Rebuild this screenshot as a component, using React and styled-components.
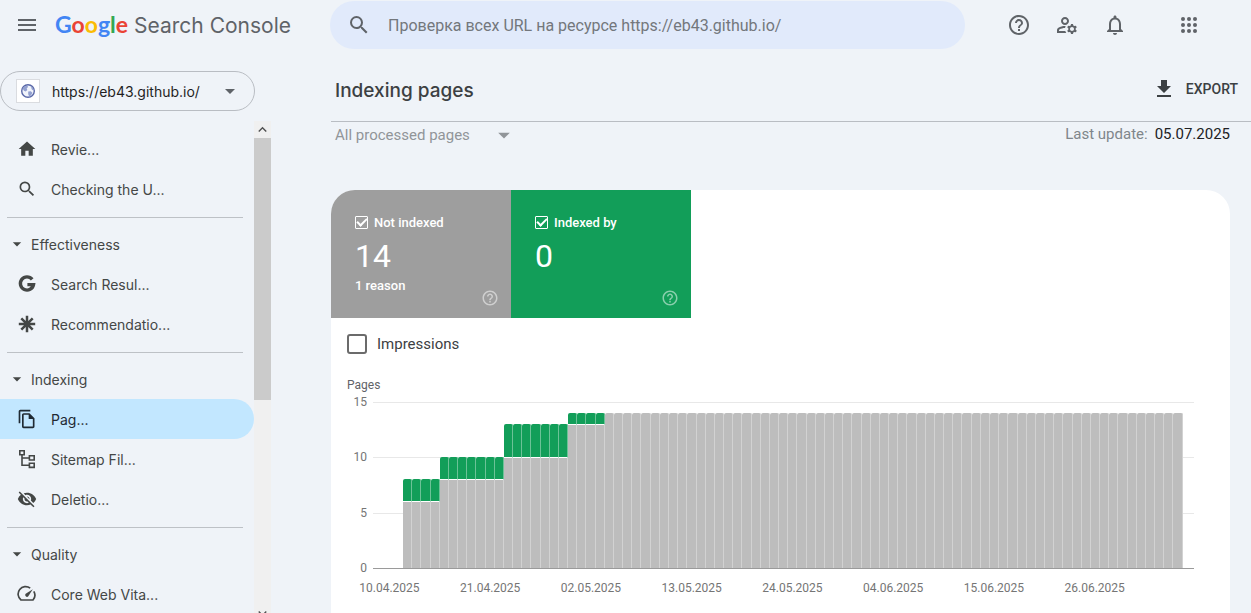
import React from "react";
import styled, { createGlobalStyle } from "styled-components";
import {
  MdMenu, MdSearch, MdHelpOutline, MdOutlineManageAccounts, MdNotificationsNone,
  MdArrowDropDown, MdHome, MdOutlineFileCopy, MdVisibilityOff, MdKeyboardArrowUp, MdKeyboardArrowDown,
} from "react-icons/md";

const GlobalStyle = createGlobalStyle`
  * { box-sizing: border-box; }
  body { margin: 0; background: #eff3f8; color: #3c4043; font-family: Roboto, "Liberation Sans", sans-serif; }
  button, input, select { font: inherit; color: inherit; }
  h1, p { margin: 0; }
  svg { display: block; flex: none; }
`;

const brand = `font-family: Inter, Roboto, sans-serif;`;

const Shell = styled.div`
  height: 100vh;
  overflow: hidden;
  display: flex;
  flex-direction: column;
`;
const TopBar = styled.header`
  display: flex;
  align-items: center;
  height: 50px;
  flex: none;
`;
const BrandArea = styled.div`
  width: 330px;
  flex: none;
  display: flex;
  align-items: center;
  padding-left: 15px;
  gap: 16px;
`;
const IconButton = styled.button`
  border: 0;
  padding: 0;
  background: none;
  color: ${(p) => p.$color || "#5f6368"};
  display: flex;
  cursor: pointer;
`;
const Logo = styled.a`
  ${brand}
  display: flex;
  align-items: baseline;
  gap: 6px;
  font-size: 21px;
  line-height: 32px;
  color: #5f6368;
  text-decoration: none;
  white-space: nowrap;
`;
const Google = styled.span`
  font-family: Lato, Inter, sans-serif;
  font-size: 23px;
  font-weight: 700;
`;
const Letter = styled.span`
  color: ${(p) => p.$c};
`;
const SearchBox = styled.label`
  flex: 0 1 635px;
  height: 48px;
  border-radius: 24px;
  background: #e1eafb;
  display: flex;
  align-items: center;
  gap: 17px;
  padding: 0 17px;
  color: #5f6368;
`;
const SearchInput = styled.input`
  flex: 1;
  min-width: 0;
  border: 0;
  outline: 0;
  padding: 0;
  background: none;
  font-size: 16px;
  &::placeholder { color: #73777c; opacity: 1; }
`;
const Tools = styled.div`
  margin-left: auto;
  padding-right: 50px;
  display: flex;
  gap: 24px;
  & > :last-child { margin-left: 26px; }
`;
const Body = styled.div`
  flex: 1;
  min-height: 0;
  display: flex;
`;
const Sidebar = styled.aside`
  width: 271px;
  flex: none;
  display: flex;
  flex-direction: column;
  padding-top: 21px;
`;
const Property = styled.button`
  ${brand}
  width: 255px;
  height: 40px;
  flex: none;
  border: 1px solid #b9bdc3;
  border-radius: 20px;
  background: none;
  display: flex;
  align-items: center;
  padding: 0 12px 0 15px;
  gap: 12px;
  font-size: 14px;
  color: #1f1f1f;
  & > :last-child { margin-left: auto; color: #5f6368; }
`;
const Favicon = styled.span`
  width: 24px;
  height: 24px;
  background: #fff;
  border: 1px solid #dadce0;
  display: grid;
  place-items: center;
`;
const NavScroll = styled.div`
  flex: 1;
  min-height: 0;
  margin-top: 10px;
  display: flex;
`;
const Nav = styled.nav`
  ${brand}
  width: 254px;
  overflow: hidden;
  padding-top: 8px;
  font-size: 14px;
`;
const NavItem = styled.a`
  height: 40px;
  display: flex;
  align-items: center;
  gap: 14px;
  padding-left: 17px;
  border-radius: 0 20px 20px 0;
  background: ${(p) => (p.$active ? "#c2e7ff" : "none")};
  color: ${(p) => (p.$active ? "#1f2a33" : "#444746")};
  text-decoration: none;
  white-space: nowrap;
`;
const NavGroup = styled.section`
  margin-top: 8px;
`;
const Rule = styled.hr`
  margin: 0 11px 0 7px;
  border: 0;
  border-top: 1px solid #bdc1c6;
`;
const GroupButton = styled.button`
  width: 100%;
  height: 40px;
  border: 0;
  background: none;
  padding: 0 0 0 7px;
  display: flex;
  align-items: center;
  gap: 4px;
  color: #444746;
  margin-top: 6px;
`;
const ScrollRail = styled.div`
  width: 17px;
  background: #f0f0f0;
  display: flex;
  flex-direction: column;
  color: #505050;
`;
const RailEnd = styled.div`
  height: ${(p) => p.$h};
  flex: none;
  overflow: hidden;
`;
const Track = styled.div`
  flex: 1;
`;
const Thumb = styled.div`
  height: 56%;
  background: #cbcbcb;
`;
const Main = styled.main`
  flex: 1;
  min-width: 0;
  margin-left: 60px;
  display: flex;
  flex-direction: column;
`;
const TitleRow = styled.div`
  height: 72px;
  flex: none;
  display: flex;
  align-items: center;
  justify-content: space-between;
  padding: 10px 13px 0 4px;
  border-bottom: 1px solid #b9bdc3;
`;
const Title = styled.h1`
  ${brand}
  font-size: 19px;
  line-height: 28px;
  font-weight: 500;
`;
const Export = styled.button`
  border: 0;
  background: none;
  padding: 0;
  display: flex;
  align-items: center;
  gap: 10px;
  font-size: 14px;
  line-height: 20px;
  font-weight: 500;
  margin-bottom: 4px;
`;
const FilterRow = styled.div`
  height: 24px;
  flex: none;
  display: flex;
  align-items: center;
  justify-content: space-between;
  padding: 0 21px 0 4px;
  font-size: 15px;
  color: #80868b;
`;
const Filter = styled.button`
  border: 0;
  background: none;
  padding: 2px 0 0;
  display: flex;
  align-items: center;
  gap: 20px;
  color: #919599;
`;
const Updated = styled.p`
  display: flex;
  gap: 7px;
  & strong { font-weight: 400; color: #202124; }
`;
const Card = styled.section`
  flex: 1;
  min-height: 0;
  margin: 44px 21px 0 0;
  border-radius: 24px 24px 0 0;
  background: #fff;
  overflow: hidden;
`;
const Metrics = styled.div`
  display: flex;
`;
const Metric = styled.div`
  width: 180px;
  height: 128px;
  padding: 23px 12px 0 24px;
  background: ${(p) => p.$bg};
  color: #fff;
  font-size: 13px;
  font-weight: 500;
  display: grid;
  grid-template-columns: 1fr auto;
  grid-template-rows: 18px 46px 30px;
`;
const MetricLabel = styled.label`
  grid-column: 1 / 3;
  display: flex;
  align-items: center;
  gap: 6px;
`;
const MetricCheck = styled.input`
  appearance: none;
  width: 13px;
  height: 13px;
  margin: 0;
  border: 1px solid #fff;
  border-radius: 1px;
  display: grid;
  place-items: center;
  &:checked::before {
    content: "";
    width: 8px;
    height: 4px;
    border: solid #fff;
    border-width: 0 0 2px 2px;
    transform: translateY(-1px) rotate(-45deg);
  }
`;
const MetricValue = styled.p`
  grid-column: 1 / 3;
  font-size: 32px;
  line-height: 50px;
  font-weight: 400;
`;
const MetricNote = styled.p`
  line-height: 18px;
`;
const MetricHelp = styled(IconButton)`
  align-self: end;
`;
const Impressions = styled.label`
  display: flex;
  align-items: center;
  gap: 10px;
  padding: 16px 16px 0;
  font-size: 15px;
  line-height: 20px;
`;
const BoxCheck = styled.input`
  appearance: none;
  width: 20px;
  height: 20px;
  margin: 0;
  border: 2px solid #6b6b6b;
  border-radius: 3px;
`;
const Chart = styled.figure`
  margin: 22px 0 0;
  font-size: 12px;
  color: #757575;
`;
const AxisTitle = styled.figcaption`
  padding-left: 16px;
  line-height: 18px;
  color: #5f6368;
`;
const PlotRow = styled.div`
  display: flex;
  gap: 6px;
  padding: 0 36px 0 16px;
`;
const YAxis = styled.div`
  width: 20px;
  height: 182px;
  display: flex;
  flex-direction: column;
  justify-content: space-between;
  text-align: right;
  line-height: 16px;
`;
const Plot = styled.div`
  flex: 1;
  height: 167px;
  margin-top: 8px;
  display: grid;
  & > * { grid-area: 1 / 1; }
`;
const GridLines = styled.div`
  display: flex;
  flex-direction: column;
  justify-content: space-between;
`;
const Line = styled.div`
  height: 1px;
  background: ${(p) => (p.$base ? "#9a9a9a" : "#e8e8e8")};
`;
const Bars = styled.div`
  display: flex;
  align-items: flex-end;
  padding: 0 12px 1px 30px;
`;
const Bar = styled.div`
  flex: 1;
  height: ${(p) => (p.$total / 15) * 100}%;
  display: flex;
  flex-direction: column;
  border-radius: 2px 2px 0 0;
  overflow: hidden;
`;
const Segment = styled.div`
  flex: ${(p) => p.$n} 0 0;
  background: ${(p) => (p.$green ? "#129e59" : "#bdbdbd")};
  border-right: 1px solid ${(p) => (p.$green ? "#6cc297" : "#d2d2d2")};
  border-bottom: ${(p) => (p.$green ? "1px solid #fff" : "0")};
`;
const Dates = styled.div`
  display: grid;
  grid-template-columns: repeat(8, 1fr);
  padding: 4px 85px 0 8px;
  text-align: center;
  line-height: 16px;
`;

const AppsIcon = () => (
  <svg width="24" height="24" viewBox="0 0 24 24" fill="currentColor">
    {[6, 12, 18].flatMap((y) => [6, 12, 18].map((x) => <circle key={`${x}-${y}`} cx={x} cy={y} r="2" />))}
  </svg>
);
const DownloadIcon = () => (
  <svg width="24" height="24" viewBox="0 0 24 24" fill="currentColor">
    <path d="M19 9h-4V3H9v6H5l7 7 7-7zM5 18v2h14v-2H5z" />
  </svg>
);
const GlobeIcon = () => (
  <svg width="16" height="16" viewBox="0 0 16 16">
    <circle cx="8" cy="8" r="6.3" fill="#f1f4fb" stroke="#5a68a8" strokeWidth="1.4" />
    <path d="M2.6 5.6l2-2.2 2.6-.8 1 1.3-1.5 1.4.6 1.6-1.6 1.5-1.8-.7zM8.2 8.6l2.6-.4 1.6 1.6-1.4 2.8-1.8.9-1-2.2zM10.6 3.4l2.4 1.8.6 2.2-1.6-.6z" fill="#93a1d0" />
  </svg>
);
const GIcon = () => (
  <svg width="20" height="20" viewBox="0 0 20 20" fill="none" stroke="currentColor" strokeWidth="3.4">
    <path d="M15.2 5.4A6.6 6.6 0 1 0 16.5 10.6H10.4" />
  </svg>
);
const SparkIcon = () => (
  <svg width="20" height="20" viewBox="0 0 20 20" fill="none" stroke="currentColor" strokeWidth="2.5">
    <path d="M10 1.8v16.4M1.8 10h16.4M4.3 4.3l11.4 11.4M15.7 4.3L4.3 15.7" />
  </svg>
);
const SitemapIcon = () => (
  <svg width="20" height="20" viewBox="0 0 20 20" fill="none" stroke="currentColor" strokeWidth="1.6">
    <path d="M2.8 1.8h4.4v4H2.8zM12.4 6.8h4.8v4.2h-4.8zM12.4 14.2h4.8v4.2h-4.8zM5 6v10.3h7.4M5 9h7.4" />
  </svg>
);
const SpeedIcon = () => (
  <svg width="20" height="20" viewBox="0 0 20 20" fill="none" stroke="currentColor" strokeWidth="1.7">
    <path d="M13.2 4.2A7.4 7.4 0 0 0 4 16h12a7.4 7.4 0 0 0 .8-8.6" />
    <path d="M15.8 5.2L8.7 9.8a1.8 1.8 0 1 0 2.6 2.5z" fill="currentColor" stroke="none" />
  </svg>
);

const mdIcon = (I) => () => <I size={20} />;
const TOP = [
  { label: "Revie...", Icon: mdIcon(MdHome) },
  { label: "Checking the U...", Icon: mdIcon(MdSearch) },
];
const GROUPS = [
  { title: "Effectiveness", items: [
    { label: "Search Resul...", Icon: GIcon },
    { label: "Recommendatio...", Icon: SparkIcon },
  ] },
  { title: "Indexing", items: [
    { label: "Pag...", Icon: mdIcon(MdOutlineFileCopy), active: true },
    { label: "Sitemap Fil...", Icon: SitemapIcon },
    { label: "Deletio...", Icon: mdIcon(MdVisibilityOff) },
  ] },
  { title: "Quality", items: [{ label: "Core Web Vita...", Icon: SpeedIcon }] },
];
const RUNS = [
  { days: 4, no: 6, yes: 2 },
  { days: 7, no: 8, yes: 2 },
  { days: 7, no: 10, yes: 3 },
  { days: 4, no: 13, yes: 1 },
  { days: 63, no: 14, yes: 0 },
];
const DAYS = RUNS.flatMap((r) => Array.from({ length: r.days }, () => r));
const DATES = ["10.04.2025", "21.04.2025", "02.05.2025", "13.05.2025", "24.05.2025", "04.06.2025", "15.06.2025", "26.06.2025"];
const WORDMARK = [["G", "#4285f4"], ["o", "#ea4335"], ["o", "#fbbc04"], ["g", "#4285f4"], ["l", "#34a853"], ["e", "#ea4335"]];

const Entry = ({ label, Icon, active }) => (
  <NavItem href="#" $active={active} aria-current={active ? "page" : undefined}>
    <Icon />
    {label}
  </NavItem>
);

export default function App() {
  return (
    <Shell>
      <GlobalStyle />
      <TopBar>
        <BrandArea>
          <IconButton aria-label="Menu"><MdMenu size={24} /></IconButton>
          <Logo href="#">
            <Google>{WORDMARK.map(([ch, c], i) => <Letter key={i} $c={c}>{ch}</Letter>)}</Google>
            <span>Search Console</span>
          </Logo>
        </BrandArea>
        <SearchBox>
          <MdSearch size={24} />
          <SearchInput aria-label="Search" placeholder="Проверка всех URL на ресурсе https://eb43.github.io/" />
        </SearchBox>
        <Tools>
          <IconButton aria-label="Help"><MdHelpOutline size={24} /></IconButton>
          <IconButton aria-label="User settings"><MdOutlineManageAccounts size={24} /></IconButton>
          <IconButton aria-label="Notifications"><MdNotificationsNone size={24} /></IconButton>
          <IconButton aria-label="Apps"><AppsIcon /></IconButton>
        </Tools>
      </TopBar>
      <Body>
        <Sidebar>
          <Property>
            <Favicon><GlobeIcon /></Favicon>
            <span>https://eb43.github.io/</span>
            <MdArrowDropDown size={24} />
          </Property>
          <NavScroll>
            <Nav>
              {TOP.map((it) => <Entry key={it.label} {...it} />)}
              {GROUPS.map((g) => (
                <NavGroup key={g.title}>
                  <Rule />
                  <GroupButton><MdArrowDropDown size={20} />{g.title}</GroupButton>
                  {g.items.map((it) => <Entry key={it.label} {...it} />)}
                </NavGroup>
              ))}
            </Nav>
            <ScrollRail>
              <RailEnd $h="17px"><MdKeyboardArrowUp size={17} /></RailEnd>
              <Track><Thumb /></Track>
              <RailEnd $h="8px"><MdKeyboardArrowDown size={17} /></RailEnd>
            </ScrollRail>
          </NavScroll>
        </Sidebar>
        <Main>
          <TitleRow>
            <Title>Indexing pages</Title>
            <Export><DownloadIcon />EXPORT</Export>
          </TitleRow>
          <FilterRow>
            <Filter>All processed pages<MdArrowDropDown size={28} /></Filter>
            <Updated>Last update: <strong>05.07.2025</strong></Updated>
          </FilterRow>
          <Card>
            <Metrics>
              <Metric $bg="#9e9e9e">
                <MetricLabel><MetricCheck type="checkbox" defaultChecked />Not indexed</MetricLabel>
                <MetricValue>14</MetricValue>
                <MetricNote>1 reason</MetricNote>
                <MetricHelp $color="#cfcfcf" aria-label="About not indexed"><MdHelpOutline size={18} /></MetricHelp>
              </Metric>
              <Metric $bg="#129e59">
                <MetricLabel><MetricCheck type="checkbox" defaultChecked />Indexed by</MetricLabel>
                <MetricValue>0</MetricValue>
                <MetricNote />
                <MetricHelp $color="#88cfac" aria-label="About indexed"><MdHelpOutline size={18} /></MetricHelp>
              </Metric>
            </Metrics>
            <Impressions><BoxCheck type="checkbox" />Impressions</Impressions>
            <Chart>
              <AxisTitle>Pages</AxisTitle>
              <PlotRow>
                <YAxis><span>15</span><span>10</span><span>5</span><span>0</span></YAxis>
                <Plot>
                  <GridLines><Line /><Line /><Line /><Line $base /></GridLines>
                  <Bars>
                    {DAYS.map((d, i) => (
                      <Bar key={i} $total={d.no + d.yes}>
                        {d.yes > 0 && <Segment $green $n={d.yes} />}
                        <Segment $n={d.no} />
                      </Bar>
                    ))}
                  </Bars>
                </Plot>
              </PlotRow>
              <Dates>{DATES.map((d) => <span key={d}>{d}</span>)}</Dates>
            </Chart>
          </Card>
        </Main>
      </Body>
    </Shell>
  );
}
